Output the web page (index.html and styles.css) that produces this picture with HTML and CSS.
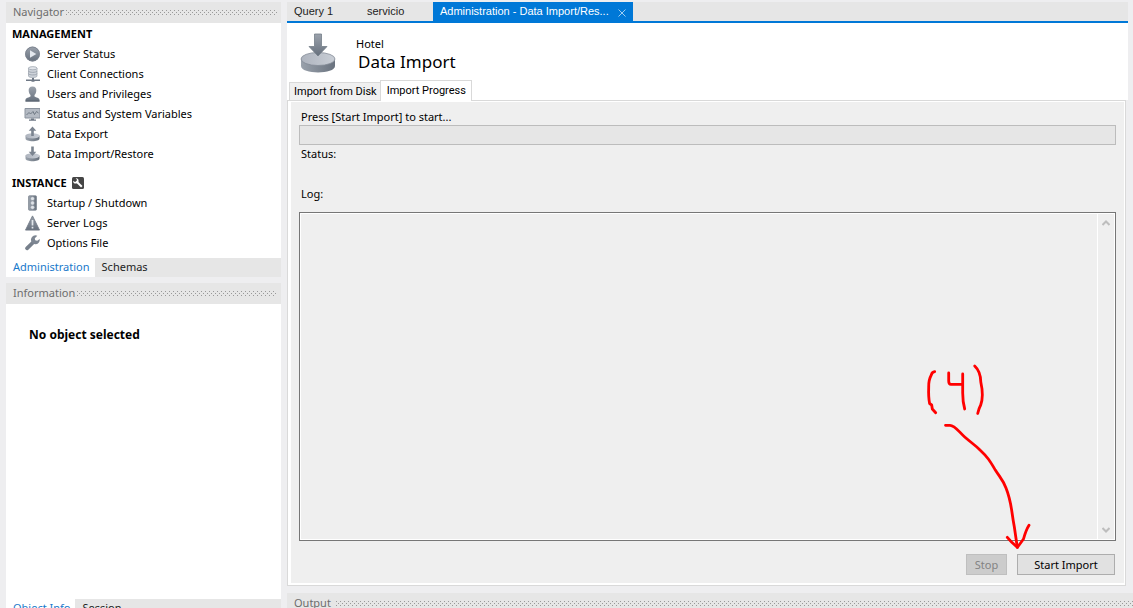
FILE: index.html
```html
<!DOCTYPE html>
<html lang="en">
<head>
<meta charset="utf-8">
<meta name="viewport" content="width=device-width, initial-scale=1">
<title>Administration - Data Import/Restore</title>
<link rel="stylesheet" href="styles.css">
</head>
<body>
<svg class="defs" aria-hidden="true">
  <defs>
    <linearGradient id="steel" x1="0" y1="0" x2="0" y2="1"><stop offset="0" stop-color="#9ba2ac"/><stop offset="1" stop-color="#66707d"/></linearGradient>
    <linearGradient id="side" x1="0" y1="0" x2="1" y2="0"><stop offset="0" stop-color="#9aa2ac"/><stop offset="1" stop-color="#69727e"/></linearGradient>
    <linearGradient id="top" x1="0" y1="0" x2="1" y2="0"><stop offset="0" stop-color="#aeb4be"/><stop offset="1" stop-color="#c9ced6"/></linearGradient>
  </defs>
</svg>
<div class="app">
  <aside class="sidebar">
    <section class="panel navigator">
      <header class="panel-header"><span>Navigator</span><i class="grip"></i></header>
      <nav class="nav">
        <h2>MANAGEMENT</h2>
        <ul>
          <li><a href="#status"><svg viewBox="0 0 16 16"><circle cx="8.500" cy="8" r="7.400" fill="url(#steel)"/><circle cx="8.500" cy="8" r="6.900" fill="none" stroke="#7b838e" stroke-width=".8"/><path d="M6 4.200v7.600L12.300 8z" fill="#e4e8ee"/></svg>Server Status</a></li>
          <li><a href="#clients"><svg viewBox="0 0 16 16"><path d="M4.500 2v8c0 2 8.500 2 8.500 0V2z" fill="#ced3da" stroke="#98a0aa" stroke-width=".7"/><ellipse cx="8.750" cy="2.200" rx="4.250" ry="1.600" fill="#e2e5ea" stroke="#98a0aa" stroke-width=".7"/><path d="M4.500 5c0 1.800 8.500 1.800 8.500 0M4.500 7.600c0 1.800 8.500 1.800 8.500 0" fill="none" stroke="#98a0aa" stroke-width=".9"/><path d="M8 12h2v1.500h6v1.500h-5.500v.8h-3V15H2v-1.500h6z" fill="#6f7885"/></svg>Client Connections</a></li>
          <li><a href="#users"><svg viewBox="0 0 16 16"><path d="M8.500.5c2.800 0 4 1.800 3.800 4.300-.1 2-.8 3.200-1.800 4.200v1.500c1.500 1 5 1.200 5 3.500v1.500h-14V14c0-2.300 3.500-2.500 5-3.500V9c-1-1-1.700-2.200-1.800-4.200C4.500 2.300 5.700.5 8.500.5z" fill="url(#steel)"/><path d="M1.500 15h14" stroke="#59626f"/></svg>Users and Privileges</a></li>
          <li><a href="#variables"><svg viewBox="0 0 16 16"><path d="M1 2.500h15v9.500H1z" fill="#b4bac3" stroke="#8b939e"/><path d="M2.500 9l2.500-2.500 1.500 1.500L9 5.500l1.500 3 2-3 2 1.500" fill="none" stroke="#66707c" stroke-width=".9"/><path d="M7 12.500h3v1h2v1.300H5v-1.300h2z" fill="#6f7885"/></svg>Status and System Variables</a></li>
          <li><a href="#export"><svg viewBox="0 0 16 16"><path d="M1.500 9.500v3c0 3.600 14 3.600 14 0v-3z" fill="url(#side)"/><ellipse cx="8.500" cy="9.800" rx="7" ry="2.600" fill="url(#top)"/><path d="M8.500.5l3.800 4.300H9.800V10H7.200V4.800H4.700z" fill="#7b8490"/></svg>Data Export</a></li>
          <li><a href="#import"><svg viewBox="0 0 16 16"><path d="M1.500 9.500v3c0 3.600 14 3.600 14 0v-3z" fill="url(#side)"/><ellipse cx="8.500" cy="9.800" rx="7" ry="2.600" fill="url(#top)"/><path d="M7.200.5h2.600v5.200h2.500L8.500 10 4.700 5.700h2.500z" fill="#7b8490"/></svg>Data Import/Restore</a></li>
        </ul>
        <h2>INSTANCE <svg class="badge" viewBox="0 0 12 12"><rect width="12" height="12" rx="1.500" fill="#454545"/><path d="M4.200 4.200l5.600 5.600" stroke="#fff" stroke-width="2"/><path d="M3.700 1.200a2.700 2.700 0 1 1-2.500 2.500l1.700 1.200 1.800-.4.300-1.800z" fill="#fff"/></svg></h2>
        <ul>
          <li><a href="#startup"><svg viewBox="0 0 16 16"><rect x="4.500" y=".7" width="8" height="14.600" rx="1" fill="url(#side)" stroke="#7b848f" stroke-width=".7"/><g fill="#dfe3e8" stroke="#8a929d" stroke-width=".4"><circle cx="8.500" cy="3.700" r="1.900"/><circle cx="8.500" cy="8" r="1.900"/><circle cx="8.500" cy="12.300" r="1.900"/></g></svg>Startup / Shutdown</a></li>
          <li><a href="#logs"><svg viewBox="0 0 16 16"><path d="M8.500.9l7 14.200h-14z" fill="url(#steel)" stroke="#747d89" stroke-width=".9" stroke-linejoin="round"/><path d="M8.500 5v5.500M8.500 11.800v1.700" stroke="#e3e7ec" stroke-width="1.700"/></svg>Server Logs</a></li>
          <li><a href="#options"><svg viewBox="0 0 16 16"><path d="M3 13.300L9.500 7" stroke="#77808c" stroke-width="3.800" stroke-linecap="round"/><path d="M13.300.8A4.400 4.400 0 1 0 15.700 4l-2.500 1.700-2-.5-.4-2z" fill="#7d8692"/></svg>Options File</a></li>
        </ul>
      </nav>
      <div class="switcher" role="tablist">
        <button type="button" role="tab" aria-selected="true">Administration</button>
        <button type="button" role="tab" aria-selected="false">Schemas</button>
      </div>
    </section>
    <section class="panel information">
      <header class="panel-header"><span>Information</span><i class="grip"></i></header>
      <p class="empty">No object selected</p>
      <div class="switcher" role="tablist">
        <button type="button" role="tab" aria-selected="true">Object Info</button>
        <button type="button" role="tab" aria-selected="false">Session</button>
      </div>
    </section>
  </aside>
  <main class="main">
    <div class="doc-tabs" role="tablist">
      <button type="button" role="tab" aria-selected="false">Query 1</button>
      <button type="button" role="tab" aria-selected="false">servicio</button>
      <button type="button" role="tab" aria-selected="true">Administration - Data Import/Res...<svg viewBox="0 0 8 8"><path d="M.5.5l7 7M7.500.5l-7 7" stroke="#9dcdf2" fill="none"/></svg></button>
    </div>
    <div class="page-head">
      <svg class="page-icon" viewBox="0 0 36 40"><path d="M1 26v7c0 8.500 34 8.500 34 0v-7z" fill="url(#side)"/><ellipse cx="18" cy="26" rx="17" ry="6.500" fill="url(#top)" stroke="#848c97" stroke-width=".8"/><path d="M14.500 1h7v12.500h5.500L18 23 9 13.500h5.500z" fill="url(#steel)" stroke="#747d88" stroke-width=".8"/></svg>
      <div>
        <p>Hotel</p>
        <h1>Data Import</h1>
      </div>
    </div>
    <div class="page-tabs" role="tablist">
      <button type="button" role="tab" aria-selected="false">Import from Disk</button>
      <button type="button" role="tab" aria-selected="true">Import Progress</button>
    </div>
    <div class="frame">
      <div class="import">
        <label for="progress">Press [Start Import] to start...</label>
        <progress id="progress" value="0" max="100"></progress>
        <p class="status">Status:</p>
        <label for="log">Log:</label>
        <div class="log">
          <textarea id="log" readonly></textarea>
          <div class="scroll">
            <svg viewBox="0 0 8 6"><path d="M.5 5L4 1.500 7.500 5" fill="none" stroke="#bdbdbd" stroke-width="2"/></svg>
            <svg viewBox="0 0 8 6"><path d="M.5 1L4 4.500 7.500 1" fill="none" stroke="#bdbdbd" stroke-width="2"/></svg>
          </div>
        </div>
        <div class="actions">
          <button type="button" disabled>Stop</button>
          <button type="button" class="start">Start Import</button>
        </div>
      </div>
    </div>
    <header class="panel-header output"><span>Output</span><i class="grip"></i></header>
  </main>
  <svg class="note" viewBox="0 0 120 192" role="img" aria-label="(4)">
    <g fill="none" stroke="#f00" stroke-width="2.800" stroke-linecap="round" stroke-linejoin="round">
      <path d="M14.700 11.700Q12 12 11.300 15 8.500 20 8.700 27 8.300 37 9.600 43.500L11.700 45 12.300 49 15.700 52.700"/>
      <path d="M28.700 13V21Q28.700 24.300 31 24.300H42M42.700 14V33Q42.700 42 44.700 49"/>
      <path d="M54.700 6C59 10 60.700 15 60.800 22 63 32 62.500 40 60.700 45Q59 48 57.700 53.500"/>
      <path d="M25.500 65.300H30C35 65.300 39 72 45 77.300C51 82.500 55 85 60 90C68 97.500 70 101 75 109.500C80 117.500 83 120 86 128C92 143 91 150 94.300 166.700L97.300 187.300"/>
      <path d="M87.300 177.300Q91 182 97.500 187.300L103.500 179Q106 170 109 165.300"/>
    </g>
  </svg>
</div>
</body>
</html>
```

FILE: styles.css
```css
* { box-sizing: border-box; }

body {
  margin: 0;
  background: #eeeef0;
  color: #000;
  font: 11px/20px "Noto Sans", "Open Sans", sans-serif;
}

h1, h2, p, ul { margin: 0; padding: 0; }
ul { list-style: none; }
button { border: 0; padding: 0; background: none; color: inherit; font: inherit; white-space: nowrap; }
a { color: inherit; text-decoration: none; }
svg { flex: none; }
.defs { position: absolute; width: 0; height: 0; }

.app {
  position: relative;
  display: flex;
  gap: 6px;
  height: 100vh;
  min-height: 480px;
  padding: 2px 0 0 6px;
  overflow: hidden;
}

/* Sidebar */
.sidebar { display: flex; flex-direction: column; flex: none; gap: 6px; width: 275px; }
.panel { display: flex; flex-direction: column; background: #fff; }
.information { flex: 1; margin-bottom: -10px; }

.panel-header {
  display: flex;
  align-items: center;
  gap: 2px;
  height: 21px;
  padding: 0 4px 0 7px;
  background: #e6e6e6;
  color: #6d6d6d;
  line-height: 18px;
}
.panel-header span { padding-bottom: 1px; }

.grip {
  flex: 1;
  height: 5px;
  background:
    conic-gradient(at 1px 1px, transparent 75%, #999 0) 0 0 / 4px 4px,
    conic-gradient(at 1px 1px, transparent 75%, #999 0) 2px 2px / 4px 4px;
}

.nav { padding: 1px 6px 5px; }
.nav h2 { display: flex; align-items: center; gap: 5px; font-size: 11px; line-height: 20px; }
.nav ul + h2 { margin-top: 9px; }
.nav a { display: flex; align-items: center; gap: 7px; padding-left: 12px; }
.nav a svg { width: 16px; height: 16px; }
.badge { width: 12px; height: 12px; margin-bottom: 1px; }

.switcher { display: flex; flex: none; height: 19px; background: #e6e6e6; }
.switcher button { padding: 0 6px 2px 7px; color: #222; line-height: 17px; }
.switcher [aria-selected="true"] { padding-right: 5px; background: #fff; color: #1979ca; }

.empty { flex: 1; padding: 21px 23px; font-size: 12px; font-weight: bold; }

/* Main area */
.main { display: flex; flex: 1; flex-direction: column; min-width: 0; }

.doc-tabs {
  display: flex;
  flex: none;
  height: 21px;
  margin-right: 5px;
  border-bottom: 2px solid #0078d7;
  background: #e6e6e6;
  color: #222;
  font: 11px/18px "Liberation Sans", Arial, sans-serif;
}
.doc-tabs button { min-width: 73px; padding: 0 7px 2px; text-align: left; }
.doc-tabs [aria-selected="true"] { display: flex; align-items: center; gap: 9px; background: #0078d7; color: #fff; }
.doc-tabs svg { width: 8px; height: 8px; margin-top: 4px; }

.page-head {
  display: flex;
  flex: none;
  gap: 20px;
  height: 57px;
  margin-right: 5px;
  padding: 10px 13px 0;
  background: #fff;
}
.page-icon { width: 36px; height: 40px; }
.page-head p { padding-top: 3px; line-height: 16px; }
.page-head h1 { padding-left: 2px; font-size: 17px; font-weight: normal; line-height: 20px; }

.page-tabs {
  display: flex;
  flex: none;
  align-items: flex-end;
  height: 20px;
  margin-right: 5px;
  padding-left: 2px;
  background: #fff;
  font-family: Roboto, "Noto Sans", sans-serif;
}
.page-tabs button { height: 18px; padding: 1px 3px 0 4px; border: 1px solid #d9d9d9; border-bottom: 0; background: #f0f0f0; line-height: 16px; }
.page-tabs [aria-selected="true"] { z-index: 1; height: 21px; margin: 0 0 -1px -1px; padding: 0 5px 1px 6px; background: #fff; line-height: 18px; }

.frame {
  display: flex;
  flex: 1;
  min-height: 0;
  margin: 0 7px 7px 0;
  padding: 1px 1px 2px 3px;
  border: 1px solid #d9d9d9;
  background: #fff;
}
.import {
  display: flex;
  flex: 1;
  flex-direction: column;
  min-width: 0;
  padding: 6px 8px 8px;
  background: #efefef;
}
.import label, .status { padding-left: 2px; line-height: 17px; }
progress {
  width: 100%;
  height: 20px;
  border: 1px solid #bcbcbc;
  background: #e6e6e6;
  appearance: none;
}
progress::-webkit-progress-bar { background: #e6e6e6; }
.status { margin-bottom: 23px; }

.log {
  display: flex;
  flex: 1;
  min-height: 0;
  margin: 10px 0 13px;
  border: 1px solid #767676;
  background: #efefef;
  box-shadow: inset 0 0 0 1px #fff;
}
.log textarea { flex: 1; border: 0; background: none; resize: none; outline: 0; font: inherit; }
.scroll {
  display: flex;
  flex-direction: column;
  align-items: center;
  justify-content: space-between;
  width: 18px;
  padding: 7px 2px 7px 0;
  border-left: 1px solid #fff;
}
.scroll svg { width: 8px; height: 6px; }

.actions { display: flex; justify-content: flex-end; gap: 10px; padding-right: 1px; }
.actions button { width: 41px; height: 21px; border: 1px solid #bfbfbf; background: #ccc; color: #838383; line-height: 19px; }
.actions .start { width: 98px; border-color: #adadad; background: #e1e1e1; color: #000; }

.output { flex: none; gap: 5px; margin-bottom: -6px; padding-right: 0; }

/* Handwritten callout over the log and the start button */
.note { position: absolute; right: 93px; bottom: 56px; width: 120px; height: 192px; pointer-events: none; }
```
